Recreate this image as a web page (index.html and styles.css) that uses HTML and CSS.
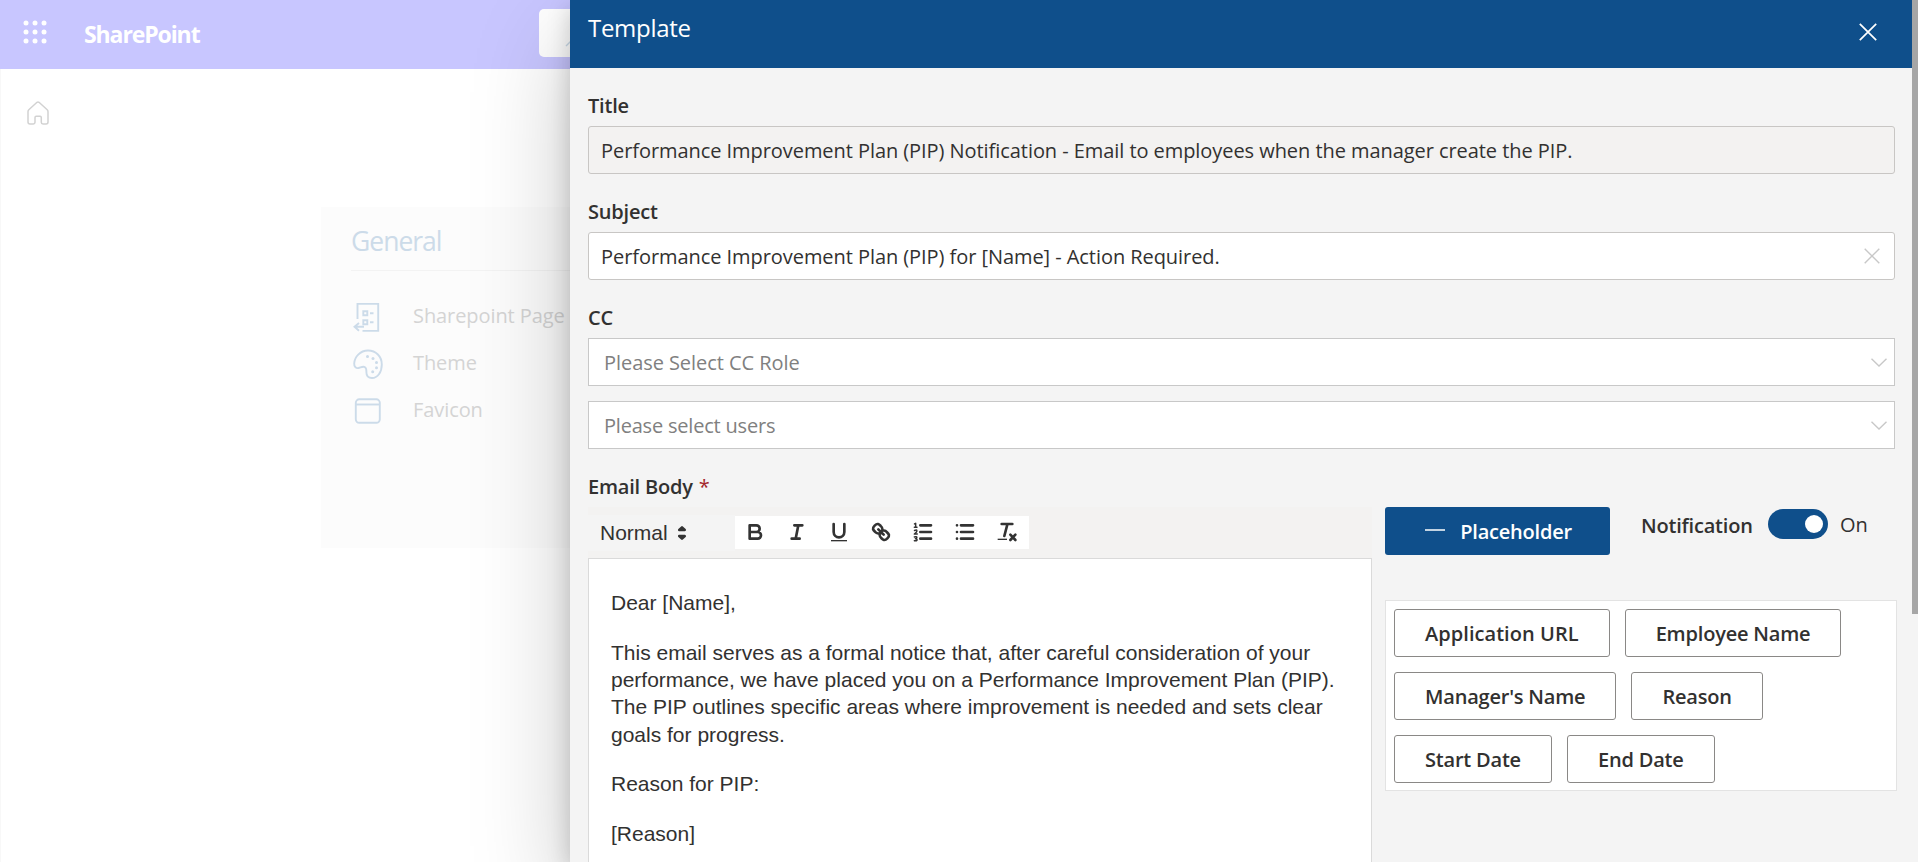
FILE: index.html
```html
<!DOCTYPE html>
<html lang="en">
<head>
<meta charset="utf-8">
<title>Template</title>
<link rel="stylesheet" href="styles.css">
</head>
<body>
<div class="page">
  <header class="suite">
    <svg class="waffle" width="24" height="24" viewBox="0 0 24 24" fill="#fff"><circle cx="3" cy="3" r="2.5"/><circle cx="12" cy="3" r="2.5"/><circle cx="21" cy="3" r="2.5"/><circle cx="3" cy="12" r="2.5"/><circle cx="12" cy="12" r="2.5"/><circle cx="21" cy="12" r="2.5"/><circle cx="3" cy="21" r="2.5"/><circle cx="12" cy="21" r="2.5"/><circle cx="21" cy="21" r="2.5"/></svg>
    <span class="brand">SharePoint</span>
    <div class="search"><svg width="16" height="16" viewBox="0 0 16 16" fill="none" stroke="#ccdbe9" stroke-width="1.5"><path d="M1 15l6-6"/><circle cx="10.500" cy="5.500" r="4.500"/></svg></div>
  </header>
  <div class="content">
    <nav class="rail"><svg width="22" height="24" viewBox="0 0 22 24" fill="none" stroke="#d2d2d2" stroke-width="1.500" stroke-linejoin="round"><path d="M10 1.300q1-.8 2 0l8.200 7.500q.8.800.8 1.900V21q0 2-2 2h-3q-1.700 0-1.700-1.700v-4.800q0-1.200-1.200-1.200H9.200q-1.200 0-1.200 1.200v4.800Q8 23 6.300 23H3q-2 0-2-2V10.700q0-1.100.8-1.900z"/></svg></nav>
    <section class="card">
      <h2>General</h2>
      <ul>
        <li><svg width="30" height="30" viewBox="0 0 30 30" fill="none" stroke="#ccdbe9" stroke-width="1.900"><path d="M4.500 17V1.900h20.700v27H9.500"/><path d="M10.300 9.300h4v4h-4zM10.300 18.300h4v4h-4zM17 11.300h3.500M17 20.300h3.500M11 24.800H1.500M6 21l-4.500 3.800L6 28.800"/></svg><span>Sharepoint Page</span></li>
        <li><svg width="30" height="30" viewBox="0 0 30 30" fill="none" stroke="#ccdbe9" stroke-width="1.900"><path d="M15 1.500C7 1.500 1.500 8 1.200 14.500 1 17.500 3 19.500 5.500 19c2.500-.6 4.500-2 6.500-.8 1.600 1 1.400 3 1.400 5 0 3.500 2.100 5.800 5.600 5.800 5.500 0 9.800-5.500 9.800-13.500S23 1.500 15 1.500z"/><g fill="#ccdbe9" stroke="none"><circle cx="14.500" cy="7.500" r="1.500"/><circle cx="20" cy="9.500" r="1.500"/><circle cx="23.500" cy="13.500" r="1.500"/><circle cx="23.500" cy="18.700" r="1.500"/><circle cx="19.700" cy="22.700" r="1.500"/></g></svg><span>Theme</span></li>
        <li><svg width="30" height="30" viewBox="0 0 30 30" fill="none" stroke="#ccdbe9" stroke-width="1.900"><rect x="2.800" y="3.300" width="24" height="23.500" rx="3.500"/><path d="M3 8.500h24"/></svg><span>Favicon</span></li>
      </ul>
    </section>
  </div>
</div>

<aside class="panel">
  <header class="panel-head">
    <h1>Template</h1>
    <svg width="18" height="18" viewBox="0 0 18 18" stroke="#fff" stroke-width="1.700"><path d="M.8.800l16.400 16.400M17.200.800L.8 17.200"/></svg>
  </header>
  <div class="form">
    <label class="label">Title</label>
    <div class="input disabled"><span>Performance Improvement Plan (PIP) Notification - Email to employees when the manager create the PIP.</span></div>
    <label class="label">Subject</label>
    <div class="input"><span>Performance Improvement Plan (PIP) for [Name] - Action Required.</span>
      <svg width="16" height="16" viewBox="0 0 16 16" stroke="#c8c8c8" stroke-width="1.400"><path d="M.7.700l14.600 14.600M15.300.700L.7 15.300"/></svg></div>
    <label class="label">CC</label>
    <div class="input select"><span>Please Select CC Role</span><svg width="16" height="9" viewBox="0 0 16 9" fill="none" stroke="#c8c8c8" stroke-width="1.400"><path d="M.5.700L8 8 15.500.700"/></svg></div>
    <div class="input select second"><span>Please select users</span><svg width="16" height="9" viewBox="0 0 16 9" fill="none" stroke="#c8c8c8" stroke-width="1.400"><path d="M.5.700L8 8 15.500.700"/></svg></div>
    <label class="label">Email Body <b class="req">*</b></label>
    <div class="body-row">
      <div class="editor">
        <div class="toolbar">
          <div class="picker">Normal
            <svg width="12" height="18" viewBox="0 0 12 18" fill="#333" stroke="#333" stroke-width="2.500" stroke-linejoin="round"><path d="M6 3.300L8.800 6H3.200zM6 14.700L8.800 12H3.200z"/></svg></div>
          <div class="tools">
            <svg viewBox="0 0 18 18"><path d="M5 4h5a2.500 2.500 0 0 1 0 5H5zM5 9h6a2.500 2.500 0 0 1 0 5H5z"/></svg>
            <svg viewBox="0 0 18 18"><path d="M7 4h6M5 14h6M8 14l2-10"/></svg>
            <svg viewBox="0 0 18 18"><path d="M5 3v6a4.012 4.012 0 0 0 4 4 4.012 4.012 0 0 0 4-4V3"/><rect class="fill" x="3" y="15" width="12" height="1"/></svg>
            <svg viewBox="0 0 18 18"><path d="M7 7l4 4M8.900 4.577a3.476 3.476 0 0 1 .36 4.679 3.476 3.476 0 0 1-4.679-.360C3.185 7.500 2.035 6.400 4.217 4.217s3.286-1.036 4.683.360zM13.423 9.100a3.476 3.476 0 0 0-4.679-.360 3.476 3.476 0 0 0 .36 4.679c1.392 1.392 2.500 2.542 4.679.360s1.036-3.283-.360-4.679z"/></svg>
            <svg viewBox="0 0 18 18"><path d="M7 4h8M7 9h8M7 14h8"/><path class="thin" d="M2.500 5.500h2M3.500 5.500v-3l-.9.400M2.600 7.900q1.900-.9 1.800.4Q4.300 9.200 2.500 10.500h2.200M2.500 12.700q1.900-.5 1.900.5 0 .8-1.100.8 1.300 0 1.300.9 0 1-2.100.600"/></svg>
            <svg viewBox="0 0 18 18"><path d="M6 4h9M6 9h9M6 14h9M3 4h0M3 9h0M3 14h0"/></svg>
            <svg viewBox="0 0 18 18"><path d="M5 3h8M9.350 3L7 12M11.500 11l3.800 4M15.300 11L11.500 15"/><rect class="fill" x="2" y="14" width="7" height="1"/></svg>
          </div>
        </div>
        <div class="doc">
          <p>Dear [Name],</p>
          <p>This email serves as a formal notice that, after careful consideration of your<br>performance, we have placed you on a Performance Improvement Plan (PIP).<br>The PIP outlines specific areas where improvement is needed and sets clear<br>goals for progress.</p>
          <p>Reason for PIP:</p>
          <p>[Reason]</p>
        </div>
      </div>
      <div class="side">
        <div class="side-top">
          <button class="primary"><svg width="20" height="2" viewBox="0 0 20 2"><path d="M0 1h20" stroke="#fff" stroke-width="1.500"/></svg><span>Placeholder</span></button>
          <span class="notif">Notification</span>
          <span class="toggle"><i></i></span>
          <span class="on">On</span>
        </div>
        <div class="tokens">
          <div class="token-row"><button class="app">Application URL</button><button>Employee Name</button></div>
          <div class="token-row"><button>Manager's Name</button><button>Reason</button></div>
          <div class="token-row"><button>Start Date</button><button>End Date</button></div>
        </div>
      </div>
    </div>
  </div>
  <div class="thumb"></div>
</aside>
</body>
</html>
```
FILE: styles.css
```css
* { box-sizing: border-box; }
body { margin: 0; width: 1918px; height: 862px; overflow: hidden; background: #fff; color: #323130; font-family: "Open Sans", "Noto Sans", sans-serif; font-size: 20px; position: relative; }
h1, h2, ul, p { margin: 0; padding: 0; font-weight: 400; }
svg { display: block; flex: none; }

.page { height: 862px; border-left: 1px solid #f8f8f8; }
.suite { height: 69px; margin-left: -1px; background: #c8c6ff; display: flex; align-items: flex-start; }
.waffle { margin: 20px 0 0 23px; }
.brand { margin: 17px 0 0 37px; width: 455px; color: #fff; font-size: 23px; line-height: 34px; font-weight: 700; letter-spacing: -1.100px; }
.search { width: 700px; height: 48px; margin-top: 9px; padding: 22px 26px; border-radius: 5px; background: #fff; }
.content { display: flex; align-items: flex-start; }
.rail { width: 320px; padding: 32px 0 0 26px; }
.card { width: 900px; height: 341px; margin-top: 138px; padding: 14px 30px; background: #fcfcfc; }
.card h2 { height: 50px; border-bottom: 1px solid #f3f3f3; color: #ccdbe9; font-size: 26.500px; line-height: 41px; letter-spacing: -1px; }
.card ul { list-style: none; padding-top: 21px; }
.card li { display: flex; align-items: center; height: 47px; padding-left: 2px; gap: 30px; color: #d4d4d4; }
.card li svg { position: relative; top: 1px; }
.card li span { letter-spacing: -.08px; }

.panel { position: absolute; left: 570px; top: 0; width: 1348px; height: 862px; background: #f4f4f4; box-shadow: 0 38px 92px rgba(0,0,0,.22), 0 7px 22px rgba(0,0,0,.18); }
.panel-head { height: 68px; padding: 0 41px 0 18px; background: #0f4f8b; color: #fff; display: flex; justify-content: space-between; }
.panel-head h1 { font-size: 24px; line-height: 34px; margin-top: 11px; letter-spacing: -.3px; }
.panel-head svg { margin-top: 23px; }
.form { padding: 21px 23px 0 18px; }
.label { display: block; height: 37px; line-height: 34px; font-weight: 600; letter-spacing: -.2px; }
.req { margin-left: 1px; color: #a4262c; font-weight: 400; }
.input { display: flex; align-items: center; justify-content: space-between; height: 48px; margin-bottom: 21px; padding: 0 14px 0 12px; border: 1px solid #c8c6c4; border-radius: 3px; background: #fff; white-space: nowrap; letter-spacing: -.06px; }
.input span { padding-top: 1px; }
.disabled { background: #f3f2f1; }
.select { margin-bottom: 15px; padding: 0 7px 0 15px; border-color: #c8c8c8; border-radius: 0; color: #808080; }
.second { margin-bottom: 21px; letter-spacing: -.2px; }
.body-row { display: flex; gap: 13px; margin-right: -2px; }
.editor { width: 784px; font-family: "Liberation Sans", Arial, sans-serif; font-size: 21px; }
.toolbar { display: flex; align-items: center; height: 51px; background: #f3f2f1; }
.picker { width: 147px; height: 36px; padding-left: 12px; display: flex; align-items: center; gap: 8px; background: #f4f4f4; }
.tools { height: 33px; padding: 0 10px 2px 8px; display: flex; align-items: center; gap: 18px; background: #fff; }
.tools svg { width: 24px; height: 24px; fill: none; stroke: #333; stroke-width: 2; stroke-linecap: round; stroke-linejoin: round; }
.tools .fill { fill: #333; stroke: none; }
.tools .thin { stroke-width: 1.100; }
.doc { height: 304px; padding: 30px 22px 0; border: 1px solid #dadada; border-bottom: 0; background: #fff; line-height: 27.3px; white-space: nowrap; }
.doc p { margin-bottom: 22.4px; }
.doc p:last-child { margin-bottom: 0; }
.side { width: 512px; }
.side-top { display: flex; height: 93px; }
button { height: 48px; border: 1px solid #8a8886; border-radius: 3px; background: #fff; color: #323130; font: 600 20px "Open Sans", sans-serif; letter-spacing: -.2px; padding: 0 30px; white-space: nowrap; }
.app { letter-spacing: .05px; }
.primary { width: 225px; padding: 1px 38px 0 40px; border: 0; background: #0f4f8b; color: #fff; display: flex; align-items: center; justify-content: space-between; }
.primary svg { position: relative; top: -2px; }
.notif { margin: 2px 0 0 31px; width: 127px; line-height: 34px; font-weight: 600; letter-spacing: -.2px; }
.toggle { width: 60px; height: 30px; margin-top: 2px; padding: 6px 5px; border-radius: 15px; background: #0f4f8b; display: flex; justify-content: flex-end; }
.toggle i { width: 18px; height: 18px; border-radius: 50%; background: #fff; }
.on { margin: 1px 0 0 12px; line-height: 34px; }
.tokens { display: flex; flex-direction: column; gap: 15px; height: 191px; padding: 8px; border: 1px solid #e3e3e3; background: #fff; }
.token-row { display: flex; gap: 15px; }
.thumb { position: absolute; right: 0; top: 0; width: 6px; height: 614px; background: #a6a6a6; }
```
